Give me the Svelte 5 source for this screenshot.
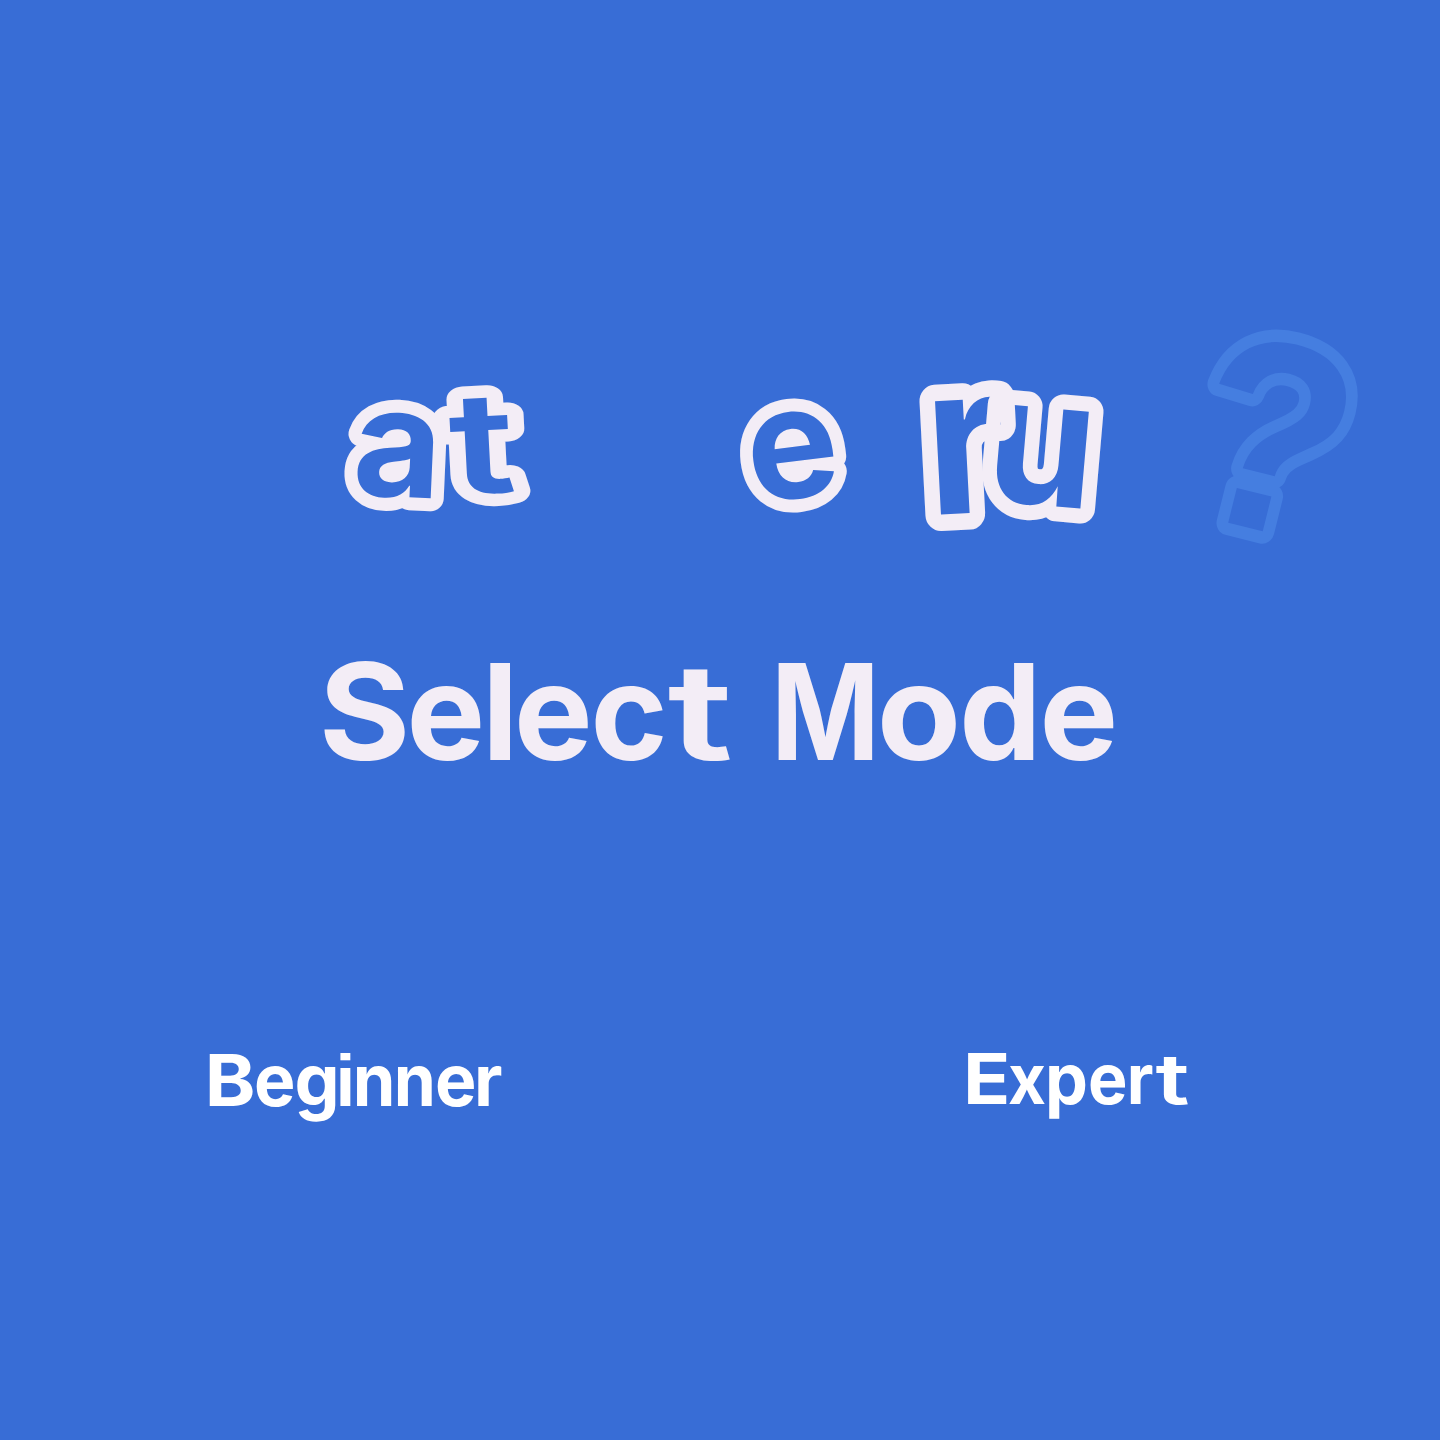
<script>
  // Letters are described by the left edge and width of their visible shape;
  // the font's own side bearings are measured and taken out.
  const ctx = document.createElement('canvas').getContext('2d');

  // Inter has a round dot on the i, so that letter comes from Liberation Sans.
  const familyOf = (char) => (char === 'i' || char === '?' ? 'Liberation Sans' : 'Inter');
  const weightOf = (char) => (char === 't' ? 600 : 700);

  function fit(char, size, left, width) {
    const family = familyOf(char);
    const weight = weightOf(char);
    ctx.font = `${weight} ${size}px "${family}"`;
    const m = ctx.measureText(char);
    const ink = m.actualBoundingBoxLeft + m.actualBoundingBoxRight;
    const scale = width / ink;
    return { char, family, weight, scale, x: left + m.actualBoundingBoxLeft * scale, length: m.width * scale };
  }

  const word = (size, letters) => letters.map(([char, from, to]) => fit(char, size, from, to - from));

  const select = word(134, [['S', 324, 405.5], ['e', 411.5, 480.5], ['l', 490, 510], ['e', 519, 588], ['c', 595.5, 663], ['t', 669, 730]]);
  const mode = word(134, [['M', 778, 873], ['o', 882, 956], ['d', 964, 1034], ['e', 1044.5, 1113.5]]);
  const beginner = word(71.5, [['B', 209, 253], ['e', 256, 293], ['g', 296.5, 335.5], ['i', 340.5, 350.5], ['n', 356.5, 392], ['n', 397.5, 432.5], ['e', 437, 474], ['r', 478, 501.5]]);
  const expert = word(70, [['E', 967.5, 1006.5], ['x', 1009, 1045.5], ['p', 1049, 1086], ['e', 1090, 1126], ['r', 1130.5, 1153], ['t', 1155.5, 1188.5]]);

  // Each logo letter has its own baseline origin, tilt, size and outline weight.
  const logo = [
    { char: 'a', x: 356.5, y: 495, tilt: 2.5, size: 152, width: 74.5, outline: 26 },
    { char: 't', x: 453, y: 495, tilt: -3, size: 141, width: 62, outline: 25 },
    { char: 'e', x: 758.5, y: 502.5, tilt: -7, size: 156, width: 81, outline: 26 },
    { char: 'r', x: 941, y: 514.5, tilt: -3, size: 208, width: 64, outline: 33 },
    { char: 'u', x: 994, y: 501, tilt: 5, size: 178, width: 87, outline: 30 },
    { char: '?', x: 1183.5, y: 511.5, tilt: 14, size: 271, width: 134, outline: 25, faint: true }
  ].map((l) => ({ ...l, fitted: fit(l.char, l.size, 0, l.width) }));
</script>

{#snippet letters(list)}{#each list as g}<tspan x={g.x} textLength={g.length} lengthAdjust="spacingAndGlyphs" font-family={g.family} font-weight={g.weight}>{g.char}</tspan>{/each}{/snippet}

<main>
  <svg class="logo" viewBox="0 310 1440 250" role="img" aria-label="Logo">
    {#each logo as l}
      <text
        class="letter"
        class:faint={l.faint}
        transform="translate({l.x} {l.y}) rotate({l.tilt}) translate({l.fitted.x} 0) scale({l.fitted.scale} 1)"
        font-family={l.fitted.family}
        font-weight={l.fitted.weight}
        font-size={l.size}
        stroke-width={l.outline}>{l.char}</text>
    {/each}
  </svg>

  <h1>
    <svg viewBox="0 630 1440 160">
      <text class="title" y="759.5">{@render letters(select)}</text>
      <text class="title" y="759.5">{@render letters(mode)}</text>
    </svg>
  </h1>

  <div class="modes">
    <button>
      <svg viewBox="0 1030 720 120">
        <text class="mode" y="1105.5" font-size="71.5">{@render letters(beginner)}</text>
      </svg>
    </button>
    <button>
      <svg viewBox="720 1030 720 120">
        <text class="mode" y="1104" font-size="70">{@render letters(expert)}</text>
      </svg>
    </button>
  </div>
</main>

<style>
  :global(body) {
    background: #386dd6;
  }

  main {
    box-sizing: border-box;
    display: flex;
    flex-direction: column;
    height: 1440px;
    padding-top: 310px;
    background: #386dd6;
    font-family: Inter, 'Liberation Sans', Arial, sans-serif;
    font-weight: 700;
  }

  svg {
    display: block;
    width: 100%;
    overflow: visible;
  }

  .logo {
    height: 250px;
  }

  /* Lighten merges overlapping outlines instead of letting one letter cover another. */
  .letter {
    fill: #386dd6;
    stroke: #f3edf6;
    stroke-linejoin: round;
    paint-order: stroke;
    mix-blend-mode: lighten;
  }

  .faint {
    stroke: #457ee0;
  }

  h1 {
    margin: 70px 0 0;
    height: 160px;
    font-size: 134px;
    line-height: 1;
  }

  .title {
    fill: #f3edf6;
    font-size: 134px;
  }

  .modes {
    display: grid;
    grid-template-columns: 1fr 1fr;
    margin-top: 240px;
  }

  button {
    padding: 0;
    border: 0;
    background: none;
    font: inherit;
  }

  .mode {
    fill: #fff;
  }
</style>
